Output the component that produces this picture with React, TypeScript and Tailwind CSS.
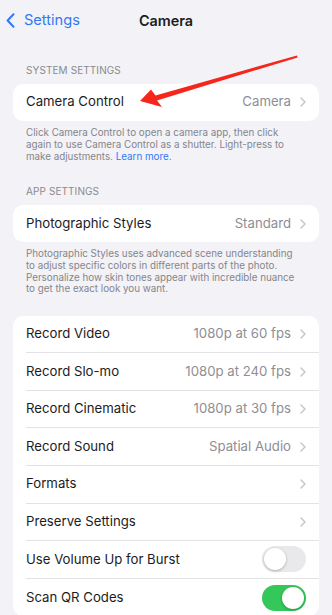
import React from "react";

const font = "font-['Inter','Noto_Sans',sans-serif]";

function Chevron() {
  return (
    <svg width="6" height="10" viewBox="0 0 6 10" className="shrink-0">
      <path d="M1 1l4 4-4 4" fill="none" stroke="#c4c4c7" strokeWidth="1.4" strokeLinecap="round" strokeLinejoin="round" />
    </svg>
  );
}

function Toggle({ on }: { on: boolean }) {
  return (
    <div
      className={
        on
          ? "w-[44px] h-[26px] rounded-full bg-[#34c759] p-[2px] flex justify-end"
          : "w-[44px] h-[26px] rounded-full bg-[#e9e9eb] p-[2px] flex justify-start"
      }
    >
      <div className="w-[22px] h-[22px] rounded-full bg-white shadow-[0_1px_3px_rgba(0,0,0,0.25)]" />
    </div>
  );
}

type Row = { label: string; value?: string; toggle?: boolean; chevron?: boolean };

function Card({ rows }: { rows: Row[] }) {
  return (
    <div className="mx-[13px] bg-white rounded-[10px] overflow-hidden">
      {rows.map((r, i) => (
        <div key={r.label} className="pl-[13px]">
          <div
            className={
              i < rows.length - 1
                ? "h-[37.6px] flex items-center pr-[13px] border-b border-[#e3e3e6]"
                : "h-[37.6px] flex items-center pr-[13px]"
            }
          >
            <span className="text-[13.2px] text-[#1c1c1e] flex-1 whitespace-nowrap">{r.label}</span>
            {r.value && <span className="text-[13.2px] text-[#8e8e93] mr-[9px] whitespace-nowrap">{r.value}</span>}
            {r.chevron && <Chevron />}
            {r.toggle !== undefined && <Toggle on={r.toggle} />}
          </div>
        </div>
      ))}
    </div>
  );
}

function Header({ top, children }: { top: string; children: React.ReactNode }) {
  return (
    <div className={`px-[26px] ${top} pb-[7px] text-[10px] leading-[13px] text-[#8a8a8e] tracking-[0.1px]`}>
      {children}
    </div>
  );
}

export default function App() {
  return (
    <div className={`w-[332px] h-[615px] overflow-hidden bg-[#f2f2f7] relative ${font}`}>
      {/* nav bar */}
      <div className="h-[42px] flex items-center relative">
        <div className="flex items-center pl-[6px] gap-[9px] text-[#3478f6]">
          <svg width="9" height="15" viewBox="0 0 9 15">
            <path d="M7.5 1.2L1.6 7.5l5.9 6.3" fill="none" stroke="#3478f6" strokeWidth="2" strokeLinecap="round" strokeLinejoin="round" />
          </svg>
          <span className="text-[14.6px]">Settings</span>
        </div>
        <div className="absolute inset-0 flex items-center justify-center text-[14.4px] font-semibold text-[#1c1c1e]">
          Camera
        </div>
      </div>

      <Header top="pt-[21.5px]">SYSTEM SETTINGS</Header>
      <Card rows={[{ label: "Camera Control", value: "Camera", chevron: true }]} />
      <div className="px-[26px] pt-[6px] text-[9.8px] leading-[11.7px] text-[#85858a] whitespace-nowrap">
        Click Camera Control to open a camera app, then click
        <br />
        again to use Camera Control as a shutter. Light-press to
        <br />
        make adjustments. <span className="text-[#3478f6]">Learn more.</span>
      </div>

      <Header top="pt-[22.5px]">APP SETTINGS</Header>
      <Card rows={[{ label: "Photographic Styles", value: "Standard", chevron: true }]} />
      <div className="px-[26px] pt-[6px] text-[9.8px] leading-[11.7px] text-[#85858a] whitespace-nowrap">
        Photographic Styles uses advanced scene understanding
        <br />
        to adjust specific colors in different parts of the photo.
        <br />
        Personalize how skin tones appear with incredible nuance
        <br />
        to get the exact look you want.
      </div>

      <div className="mt-[20.5px]">
        <Card
          rows={[
            { label: "Record Video", value: "1080p at 60 fps", chevron: true },
            { label: "Record Slo-mo", value: "1080p at 240 fps", chevron: true },
            { label: "Record Cinematic", value: "1080p at 30 fps", chevron: true },
            { label: "Record Sound", value: "Spatial Audio", chevron: true },
            { label: "Formats", chevron: true },
            { label: "Preserve Settings", chevron: true },
            { label: "Use Volume Up for Burst", toggle: false },
            { label: "Scan QR Codes", toggle: true },
          ]}
        />
      </div>

      {/* red annotation arrow */}
      <svg className="absolute left-0 top-0 pointer-events-none" width="332" height="615" viewBox="0 0 332 615">
        <polygon
          points="140,101 151,89.5 155.5,95.6 297,55.4 297.6,57.4 157,100.4 162,107"
          fill="#f5261b"
        />
      </svg>
    </div>
  );
}
